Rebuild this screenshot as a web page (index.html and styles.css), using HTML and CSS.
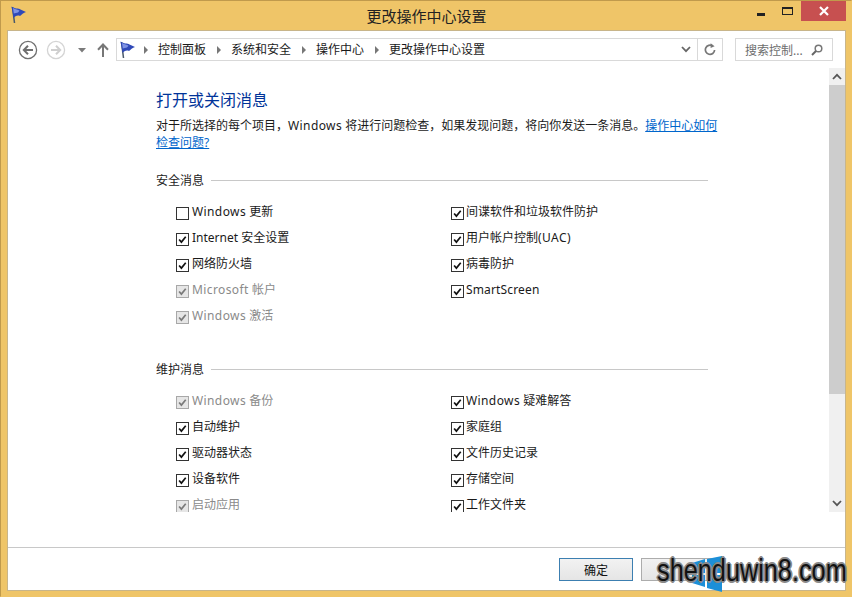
FILE: index.html
```html
<!DOCTYPE html>
<html lang="zh">
<head>
<meta charset="utf-8">
<title>更改操作中心设置</title>
<link rel="stylesheet" href="styles.css">
</head>
<body>
<svg class="defs" width="0" height="0">
  <defs>
    <symbol id="flag" viewBox="0 0 16 18">
      <path d="M2.5 1 L4.5 17" stroke="#4a5a6a" stroke-width="1.5" fill="none"/>
      <path d="M1.5 0.5 C5 3 8.5 2 10.5 3.5 L16 6 C13.5 7 11.5 8.5 10 10 C7.5 9 5 10 3.6 12 Z" fill="#2f49b8"/>
      <path d="M3 2 C6 4 8 3.2 9.5 4.8 L8 6.5 L3.8 7.5 Z" fill="#7f93e4"/>
    </symbol>
    <symbol id="tick" viewBox="0 0 13 13">
      <path d="M2.5 6.5 L5.2 9.6 L10.3 3.2" fill="none" stroke="currentColor" stroke-width="2"/>
    </symbol>
  </defs>
</svg>
<div class="window">
  <header class="titlebar">
    <svg class="title-flag"><use href="#flag"/></svg>
    <div class="title">更改操作中心设置</div>
    <div class="controls">
      <div class="ctl"><span class="min"></span></div>
      <div class="ctl"><span class="max"></span></div>
      <div class="close"><svg width="12" height="10" viewBox="0 0 12 10"><path d="M2 1 L10 9 M10 1 L2 9" stroke="#fff" stroke-width="2.2"/></svg></div>
    </div>
  </header>
  <div class="client">
    <nav class="toolbar">
      <svg class="nav back" width="20" height="20" viewBox="0 0 20 20"><circle cx="10" cy="10" r="8.6" fill="#fff" stroke="#6f6f6f" stroke-width="1.3"/><path d="M15 10 H6 M10 5.8 L5.8 10 L10 14.2" fill="none" stroke="#6f6f6f" stroke-width="2"/></svg>
      <svg class="nav fwd" width="20" height="20" viewBox="0 0 20 20"><circle cx="10" cy="10" r="8.6" fill="#fff" stroke="#d4d4d4" stroke-width="1.3"/><path d="M5 10 H14 M10 5.8 L14.2 10 L10 14.2" fill="none" stroke="#cfcfcf" stroke-width="2"/></svg>
      <svg class="nav drop" width="8" height="5" viewBox="0 0 8 5"><path d="M0 0 H8 L4 4.5 Z" fill="#7a7a7a"/></svg>
      <svg class="nav up" width="12" height="14" viewBox="0 0 12 14"><path d="M6 14 V2 M1 6.8 L6 1.5 L11 6.8" fill="none" stroke="#777" stroke-width="2"/></svg>
      <div class="address">
        <svg class="addr-flag"><use href="#flag"/></svg>
        <span class="sep"></span><span class="crumb">控制面板</span>
        <span class="sep"></span><span class="crumb">系统和安全</span>
        <span class="sep"></span><span class="crumb">操作中心</span>
        <span class="sep"></span><span class="crumb">更改操作中心设置</span>
        <svg class="chev" width="10" height="7" viewBox="0 0 10 7"><path d="M1 1 L5 5.2 L9 1" fill="none" stroke="#666" stroke-width="1.8"/></svg>
        <div class="refresh"><svg width="12" height="13" viewBox="0 0 12 13"><path d="M8.6 3 A4.6 4.6 0 1 0 10.6 7" fill="none" stroke="#777" stroke-width="1.7"/><path d="M6.6 0.2 L10.6 3.2 L6.6 5 Z" fill="#777"/></svg></div>
      </div>
      <div class="search">
        <span>搜索控制...</span>
        <svg width="12" height="12" viewBox="0 0 12 12"><circle cx="7.5" cy="4.5" r="3.3" fill="none" stroke="#777" stroke-width="1.5"/><path d="M5 7 L1 11" stroke="#666" stroke-width="2"/></svg>
      </div>
    </nav>
    <div class="middle">
      <main class="content">
        <h1>打开或关闭消息</h1>
        <p class="desc">对于所选择的每个项目，<span class="lat">Windows</span> 将进行问题检查，如果发现问题，将向你发送一条消息。<a>操作中心如何检查问题?</a></p>
        <section class="group first">
          <h2><span>安全消息</span></h2>
          <div class="options">
            <label class="opt"><i class="box"></i><span><span class="lat">Windows</span> 更新</span></label>
            <label class="opt"><i class="box"><svg><use href="#tick"/></svg></i><span>间谍软件和垃圾软件防护</span></label>
            <label class="opt"><i class="box"><svg><use href="#tick"/></svg></i><span>Internet 安全设置</span></label>
            <label class="opt"><i class="box"><svg><use href="#tick"/></svg></i><span>用户帐户控制<span class="lat">(UAC)</span></span></label>
            <label class="opt"><i class="box"><svg><use href="#tick"/></svg></i><span>网络防火墙</span></label>
            <label class="opt"><i class="box"><svg><use href="#tick"/></svg></i><span>病毒防护</span></label>
            <label class="opt off"><i class="box"><svg><use href="#tick"/></svg></i><span><span class="lat">Microsoft</span> 帐户</span></label>
            <label class="opt"><i class="box"><svg><use href="#tick"/></svg></i><span class="lat-sm">SmartScreen</span></label>
            <label class="opt off"><i class="box"><svg><use href="#tick"/></svg></i><span><span class="lat">Windows</span> 激活</span></label>
          </div>
        </section>
        <section class="group second">
          <h2><span>维护消息</span></h2>
          <div class="options">
            <label class="opt off"><i class="box"><svg><use href="#tick"/></svg></i><span><span class="lat">Windows</span> 备份</span></label>
            <label class="opt"><i class="box"><svg><use href="#tick"/></svg></i><span><span class="lat">Windows</span> 疑难解答</span></label>
            <label class="opt"><i class="box"><svg><use href="#tick"/></svg></i><span>自动维护</span></label>
            <label class="opt"><i class="box"><svg><use href="#tick"/></svg></i><span>家庭组</span></label>
            <label class="opt"><i class="box"><svg><use href="#tick"/></svg></i><span>驱动器状态</span></label>
            <label class="opt"><i class="box"><svg><use href="#tick"/></svg></i><span>文件历史记录</span></label>
            <label class="opt"><i class="box"><svg><use href="#tick"/></svg></i><span>设备软件</span></label>
            <label class="opt"><i class="box"><svg><use href="#tick"/></svg></i><span>存储空间</span></label>
            <label class="opt off"><i class="box"><svg><use href="#tick"/></svg></i><span>启动应用</span></label>
            <label class="opt"><i class="box"><svg><use href="#tick"/></svg></i><span>工作文件夹</span></label>
          </div>
        </section>
      </main>
      <aside class="scrollbar">
        <div class="arrow"><svg width="10" height="7" viewBox="0 0 10 7"><path d="M1 6 L5 1.8 L9 6" fill="none" stroke="#555" stroke-width="1.8"/></svg></div>
        <div class="track"><div class="thumb"></div></div>
        <div class="arrow"><svg width="10" height="7" viewBox="0 0 10 7"><path d="M1 1 L5 5.2 L9 1" fill="none" stroke="#555" stroke-width="1.8"/></svg></div>
      </aside>
    </div>
    <footer class="footer">
      <button class="btn primary">确定</button>
      <button class="btn cancel"></button>
    </footer>
  </div>
  <div class="watermark">
    <svg class="winlogo" width="34" height="36" viewBox="0 0 34 36"><path d="M2 7 L15 3 V17 H2 Z M17 3 L32 0 V17 H17 Z M2 19 H15 V31 L2 27 Z M17 19 H32 V36 L17 32 Z" fill="#1c8fd8"/></svg>
    <span>shenduwin8.com</span>
  </div>
</div>
</body>
</html>
```
FILE: styles.css
```css
* { box-sizing: border-box; }
html, body { margin: 0; height: 100%; overflow: hidden; }
body { font-family: "Noto Sans", "Noto Sans CJK SC", sans-serif; font-size: 12px; color: #1a1a1a; }
.defs { display: block; height: 0; }
.window {
  position: relative;
  width: 852px; height: 597px;
  background: #efc568;
  border: 1px solid #c09a4c;
  border-bottom-color: #efc568;
  border-right-color: #efc568;
  padding: 0 5px 5px 6px;
  display: flex; flex-direction: column;
}
.titlebar { position: relative; height: 29px; flex: none; display: flex; align-items: flex-start; }
.title-flag { width: 16px; height: 18px; margin: 5px 0 0 3px; flex: none; }
.title {
  position: absolute; left: 0; right: 0; top: 5px;
  text-align: center; font-size: 15px; line-height: 20px; color: #222;
}
.controls { margin-left: auto; display: flex; position: relative; }
.ctl { width: 27px; height: 20px; display: flex; align-items: center; justify-content: center; }
.min { width: 8px; height: 3px; background: #222; margin-top: 6px; }
.max { height: 8px; border: 1px solid #222; border-top-width: 2px; width: 11px; }
.close { width: 45px; height: 20px; background: #c75050; display: flex; align-items: center; justify-content: center; }
.client {
  flex: 1; min-height: 0; background: #fff;
  border: 1px solid #c8b58a;
  display: flex; flex-direction: column;
}
.toolbar { height: 37px; flex: none; display: flex; align-items: center; padding: 0 0 0 10px; position: relative; }
.nav { flex: none; }
.fwd { margin-left: 8px; }
.drop { margin-left: 12px; margin-top: 1px; }
.up { margin-left: 11px; margin-top: 1px; }
.address {
  margin-left: 7px; width: 607px; height: 23px;
  border: 1px solid #d9d9d9; display: flex; align-items: center; flex: none; padding-left: 2px;
}
.addr-flag { width: 16px; height: 18px; flex: none; margin-right: 4px; }
.sep { width: 0; height: 0; border-left: 4px solid #777; border-top: 4px solid transparent; border-bottom: 4px solid transparent; margin: 0 10px 0 5px; flex: none; }
.crumb { margin-right: 6px; line-height: 20px; white-space: nowrap; }
.chev { margin-left: auto; margin-right: 6px; flex: none; }
.refresh { width: 25px; height: 100%; border-left: 1px solid #d9d9d9; display: flex; align-items: center; justify-content: center; flex: none; }
.search {
  margin-left: 12px; width: 98px; height: 23px; border: 1px solid #d9d9d9;
  display: flex; align-items: center; justify-content: space-between;
  padding: 0 9px; color: #6d6d6d; flex: none; white-space: nowrap;
}
.middle { flex: 1; min-height: 0; display: flex; }
.content { flex: 1; min-width: 0; overflow: hidden; padding: 21px 0 0 148px; }
h1 { margin: 0; font-size: 16px; font-weight: 400; line-height: 22px; color: #003399; }
.desc { margin: 6px 0 0; width: 565px; line-height: 17px; font-size: 12px; }
.desc a { color: #0066cc; text-decoration: underline; }
.lat { letter-spacing: .4px; }
.lat-sm { letter-spacing: .15px; }
.group h2 { margin: 0; font-size: 12px; font-weight: 400; line-height: 18px; display: flex; align-items: center; gap: 7px; width: 552px; color: #222; }
.group h2::after { content: ""; flex: 1; height: 1px; background: #c8c8c8; margin-bottom: 2px; }
.first { margin-top: 21px; }
.second { margin-top: 32px; }
.options { display: grid; grid-template-columns: 275px 1fr; grid-auto-rows: 26px; margin-top: 9px; padding-left: 20px; }
.opt { display: flex; align-items: center; gap: 3px; white-space: nowrap; line-height: 18px; }
.opt:nth-child(even) { gap: 2px; }
.box { width: 13px; height: 13px; border: 1px solid #333; background: #fff; flex: none; color: #111; display: block; margin-top: 2px; }
.box svg { display: block; width: 11px; height: 11px; }
.off { color: #8a8a8a; }
.off .box { border-color: #a8a8a8; background: #e6e6e6; color: #7a7a7a; }
.scrollbar { width: 16px; flex: none; background: #fff; display: flex; flex-direction: column; }
.arrow { height: 17px; background: #f0f0f0; display: flex; align-items: center; justify-content: center; flex: none; }
.track { flex: 1; background: #f0f0f0; }
.thumb { height: 309px; background: #cdcdcd; }
.footer {
  height: 43px; flex: none; border-top: 1px solid #c8c8c8; background: #fff;
  display: flex; justify-content: flex-end; gap: 8px; padding: 10px 130px 0 0; margin-top: 35px;
}
.btn { width: 74px; height: 23px; font: inherit; color: #111; background: linear-gradient(#f2f2f2, #e5e5e5); border: 1px solid #acacac; padding: 0; }
.primary { border-color: #3c7fb1; }
.watermark { position: absolute; left: 656px; top: 553px; height: 36px; width: 195px; }
.winlogo { position: absolute; left: 33px; top: 2px; }
.watermark span {
  position: absolute; left: 0; top: 0;
  font-family: "Liberation Sans", sans-serif; font-size: 32px; line-height: 33px; color: #111;
  white-space: nowrap; transform: scaleX(.79); transform-origin: left center;
  text-shadow: 1px 0 0 #8a8a8a, -1px 0 0 #8a8a8a, 0 1px 0 #8a8a8a, 0 -1px 0 #8a8a8a, 1px 1px 0 #8a8a8a, -1px -1px 0 #8a8a8a, 1px -1px 0 #8a8a8a, -1px 1px 0 #8a8a8a, 2px 0 0 #8a8a8a, -2px 0 0 #8a8a8a, 0 2px 0 #8a8a8a, 0 -2px 0 #8a8a8a;
}
```
